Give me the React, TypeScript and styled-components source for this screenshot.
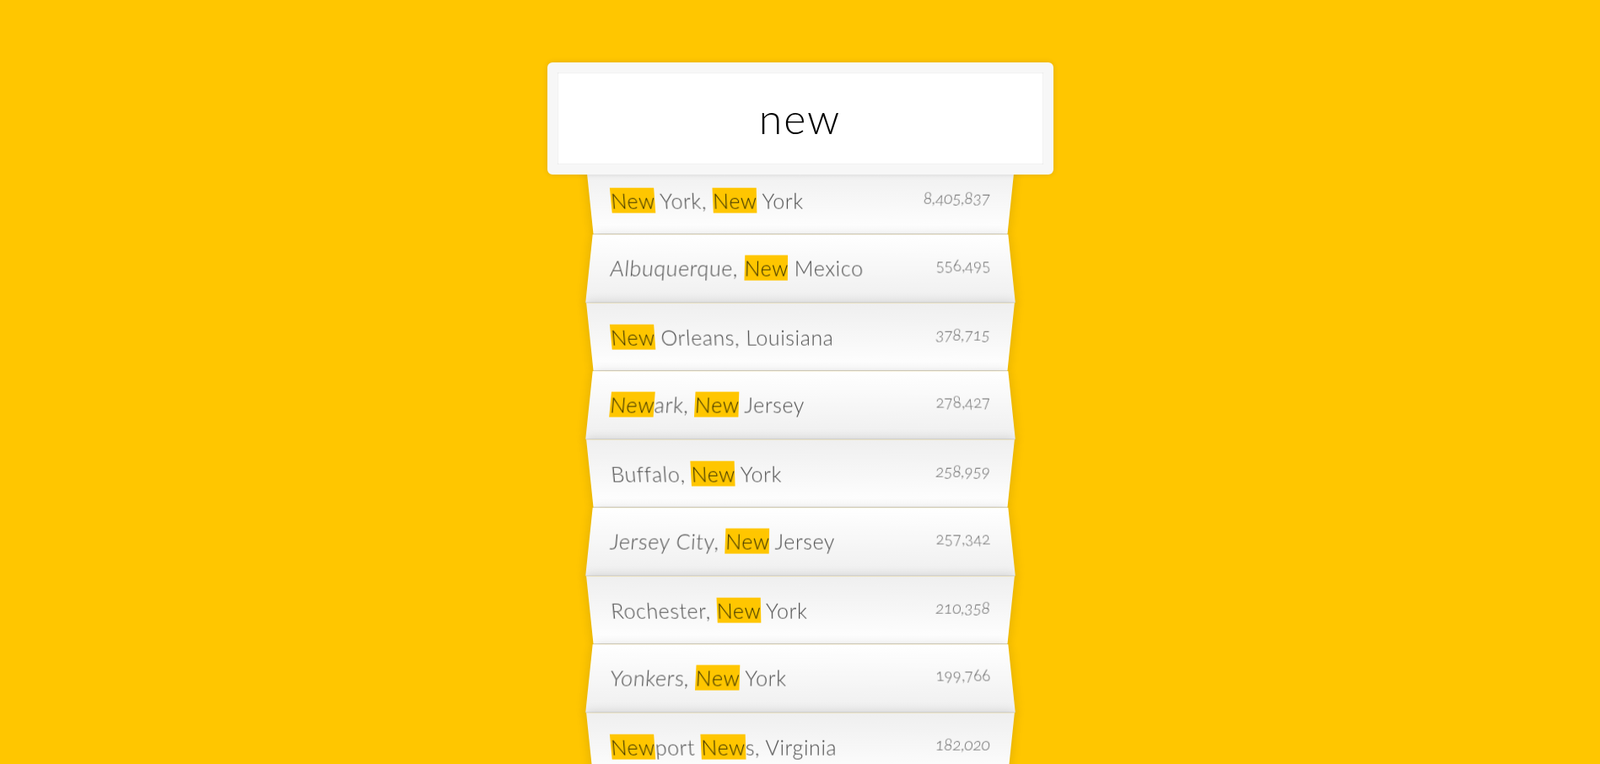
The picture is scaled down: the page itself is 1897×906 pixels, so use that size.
import React from "react";
import styled, { createGlobalStyle } from "styled-components";

const GlobalStyle = createGlobalStyle`
  html {
    box-sizing: border-box;
    background: #ffc600;
    font-family: Lato, "Open Sans", "Liberation Sans", sans-serif;
    font-size: 25px;
    font-weight: 300;
  }
  *, *::before, *::after {
    box-sizing: inherit;
  }
  body {
    margin: 0;
    overflow: hidden;
  }
`;

const SearchForm = styled.form`
  max-width: 500px;
  margin: 61px auto;
`;

const SearchInput = styled.input`
  display: block;
  width: 120%;
  height: 133px;
  margin: 0;
  padding: 25px;
  position: relative;
  left: -10%;
  top: 12.5px;
  z-index: 2;
  text-align: center;
  outline: 0;
  border: 12.5px solid #f7f7f7;
  border-radius: 6px;
  background: #ffffff;
  color: #000000;
  font-family: Lato, "Open Sans", "Liberation Sans", sans-serif;
  font-size: 50px;
  font-weight: 300;
  letter-spacing: 2px;
  box-shadow: 0 0 6px rgba(0, 0, 0, 0.12), inset 0 0 2px rgba(0, 0, 0, 0.19);
`;

const Suggestions = styled.ul`
  margin: 0;
  padding: 0;
  position: relative;
`;

const Item = styled.li<{ $even: boolean }>`
  list-style: none;
  margin: 0;
  padding: 25px;
  display: flex;
  justify-content: space-between;
  align-items: flex-start;
  border-bottom: 1px solid #d8d8d8;
  box-shadow: 0 0 12px rgba(0, 0, 0, 0.14);
  line-height: 30px;
  color: #4f4f4f;
  letter-spacing: 0.6px;
  background: ${(p) =>
    p.$even
      ? "linear-gradient(to bottom, #ffffff 0%, #efefef 100%)"
      : "linear-gradient(to top, #ffffff 0%, #efefef 100%)"};
  transform: ${(p) =>
    p.$even
      ? "perspective(125px) rotateX(3deg) translateY(2.5px) scale(1.001)"
      : "perspective(125px) rotateX(-3deg) translateY(3.75px)"};
`;

const Name = styled.span`
  white-space: nowrap;
`;

const Highlight = styled.span`
  background: #ffc600;
  color: #3a3300;
`;

const Population = styled.span`
  font-size: 18.75px;
  line-height: 24px;
  letter-spacing: 0;
  color: #666666;
  font-variant-numeric: oldstyle-nums;
`;

type City = { city: string; state: string; population: string };

const cities: City[] = [
  { city: "New York", state: "New York", population: "8,405,837" },
  { city: "Albuquerque", state: "New Mexico", population: "556,495" },
  { city: "New Orleans", state: "Louisiana", population: "378,715" },
  { city: "Newark", state: "New Jersey", population: "278,427" },
  { city: "Buffalo", state: "New York", population: "258,959" },
  { city: "Jersey City", state: "New Jersey", population: "257,342" },
  { city: "Rochester", state: "New York", population: "210,358" },
  { city: "Yonkers", state: "New York", population: "199,766" },
  { city: "Newport News", state: "Virginia", population: "182,020" },
  { city: "Syracuse", state: "New York", population: "144,669" },
  { city: "Paterson", state: "New Jersey", population: "145,948" },
];

const query = "new";

function highlight(text: string): React.ReactNode[] {
  const re = new RegExp(`(${query})`, "gi");
  return text.split(re).map((part, i) =>
    part.toLowerCase() === query ? (
      <Highlight key={i}>{part}</Highlight>
    ) : (
      <React.Fragment key={i}>{part}</React.Fragment>
    )
  );
}

export default function App() {
  return (
    <>
      <GlobalStyle />
      <SearchForm onSubmit={(e) => e.preventDefault()}>
        <SearchInput type="text" defaultValue="new" placeholder="City or State" />
        <Suggestions>
          {cities.map((c, i) => (
            <Item key={c.city + c.state} $even={i % 2 === 1}>
              <Name>{highlight(`${c.city}, ${c.state}`)}</Name>
              <Population>{c.population}</Population>
            </Item>
          ))}
        </Suggestions>
      </SearchForm>
    </>
  );
}
